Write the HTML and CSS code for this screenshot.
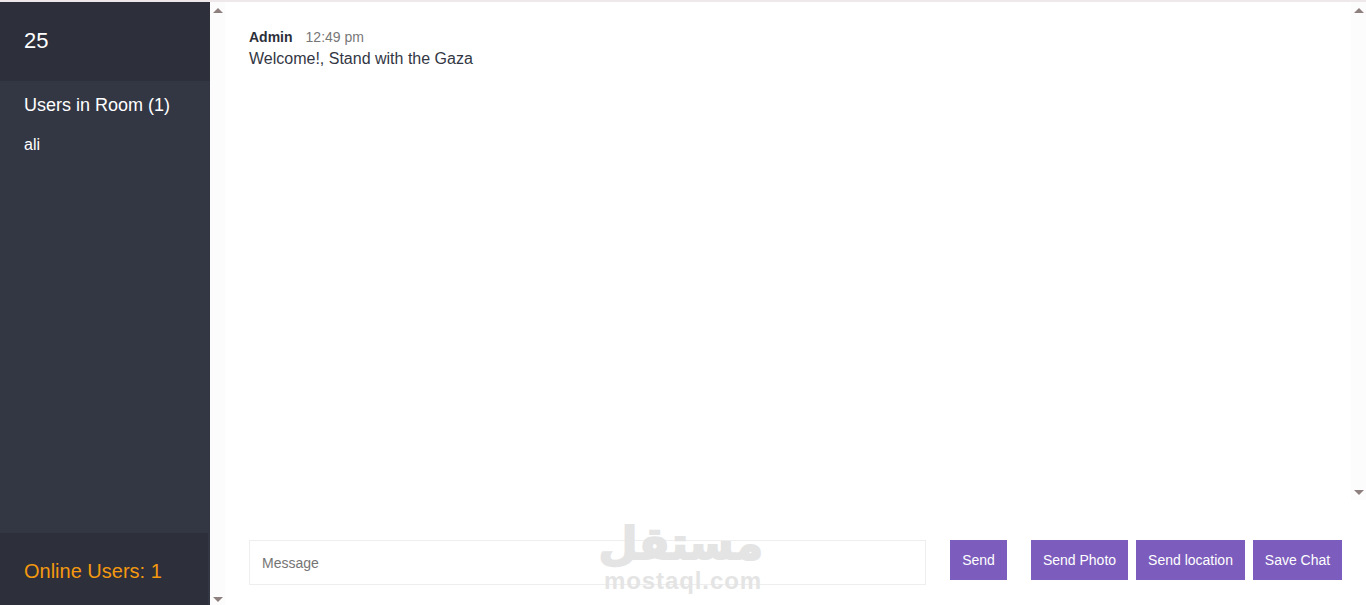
FILE: index.html
```html
<!DOCTYPE html>
<html lang="en">
<head>
    <meta charset="UTF-8">
    <meta name="viewport" content="width=device-width, initial-scale=1.0">
    <title>Chat</title>
    <link rel="stylesheet" href="styles.css">
</head>
<body>
    <div class="page">
        <div class="sidebar">
            <h2 class="room-title">25</h2>
            <div class="users">
                <h3>Users in Room (1)</h3>
                <ul>
                    <li>ali</li>
                </ul>
            </div>
            <div class="online">Online Users: 1</div>
        </div>

        <div class="scroll-strip">
            <span class="arrow-up"></span>
            <span class="arrow-down"></span>
        </div>

        <div class="chat">
            <div class="chat-top">
                <div class="messages">
                    <div class="message">
                        <p class="meta"><span class="name">Admin</span><span class="time">12:49 pm</span></p>
                        <p class="text">Welcome!, Stand with the Gaza</p>
                    </div>
                </div>
                <div class="scroll-strip scroll-strip-inner">
                    <span class="arrow-up"></span>
                    <span class="arrow-down"></span>
                </div>
            </div>

            <div class="compose">
                <input class="message-input" type="text" placeholder="Message">
                <button class="send-btn">Send</button>
                <div class="actions">
                    <button>Send Photo</button>
                    <button>Send location</button>
                    <button>Save Chat</button>
                </div>
            </div>
        </div>
    </div>

    <div class="watermark">
        <div class="wm-ar" lang="ar" dir="rtl">مستقل</div>
        <div class="wm-en">mostaql.com</div>
    </div>
</body>
</html>
```

FILE: styles.css
```css
* { box-sizing: border-box; }
html, body { margin: 0; height: 605px; overflow: hidden; }
body { font-family: "Liberation Sans", Arial, sans-serif; color: #333744; background: #fff; }

.page { display: flex; height: 605px; border-top: 2px solid #efe8ea; }

.sidebar { width: 210px; display: flex; flex-direction: column; background: #333744; color: #fff; }
.room-title { margin: 0; height: 79px; padding: 26px 24px 0; background: #2d2f3a; font-size: 22px; font-weight: 400; line-height: 26px; }
.users { flex: 1; padding: 13px 24px 0; }
.users h3 { margin: 0; font-size: 18px; font-weight: 400; line-height: 22px; }
.users ul { margin: 19px 0 0; padding: 0; list-style: none; font-size: 16px; line-height: 20px; }
.online { width: 208px; height: 72px; padding: 26px 24px 0; background: #2d2f3a; color: #f4990f; font-size: 20px; line-height: 24px; }

.scroll-strip { width: 15px; flex-shrink: 0; display: flex; flex-direction: column; justify-content: space-between; align-items: center; padding: 6px 0 3px; background: #fcfcfc; }
.scroll-strip-inner { padding-bottom: 5px; }
.arrow-up, .arrow-down { width: 0; height: 0; border-left: 5px solid transparent; border-right: 5px solid transparent; }
.arrow-up { border-bottom: 5px solid #8f8080; }
.arrow-down { border-top: 5px solid #8f8080; }

.chat { flex: 1; min-width: 0; display: flex; flex-direction: column; }
.chat-top { height: 498px; display: flex; }
.messages { flex: 1; padding: 27px 24px 0; }
.meta { margin: 0; font-size: 14px; line-height: 16px; }
.name { font-weight: 700; color: #2d2f3a; }
.time { margin-left: 13px; color: #777; }
.text { margin: 4px 0 0; font-size: 16px; line-height: 20px; }

.compose { flex: 1; display: flex; align-items: flex-start; padding: 40px 24px 0; }
.message-input { width: 677px; flex-shrink: 0; height: 45px; padding: 0 12px; border: 1px solid #eee; background: #fff; font: 14px "Liberation Sans", Arial, sans-serif; outline: none; }
.message-input::placeholder { color: #757575; opacity: 1; }
button { height: 40px; flex-shrink: 0; padding: 0 12px; border: 0; background: #7c5cbc; color: #fff; font: 14px "Liberation Sans", Arial, sans-serif; white-space: nowrap; }
.send-btn { margin-left: 24px; width: 57px; padding: 0; }
.actions { display: flex; flex-shrink: 0; gap: 8px; margin-left: 24px; }
.actions button:nth-child(1) { width: 97px; padding: 0; }
.actions button:nth-child(2) { width: 109px; padding: 0; }
.actions button:nth-child(3) { width: 89px; padding: 0; }

.watermark { position: absolute; left: 603px; top: 518px; width: 160px; color: #e4e4e4; text-align: center; pointer-events: none; }
.wm-ar { height: 50px; font-family: "DejaVu Sans", sans-serif; font-size: 45px; font-weight: 700; line-height: 52px; -webkit-text-stroke: 2px #e4e4e4; }
.wm-en { margin-top: 1px; font-size: 24px; font-weight: 700; line-height: 24px; letter-spacing: 0.9px; white-space: nowrap; }
```
